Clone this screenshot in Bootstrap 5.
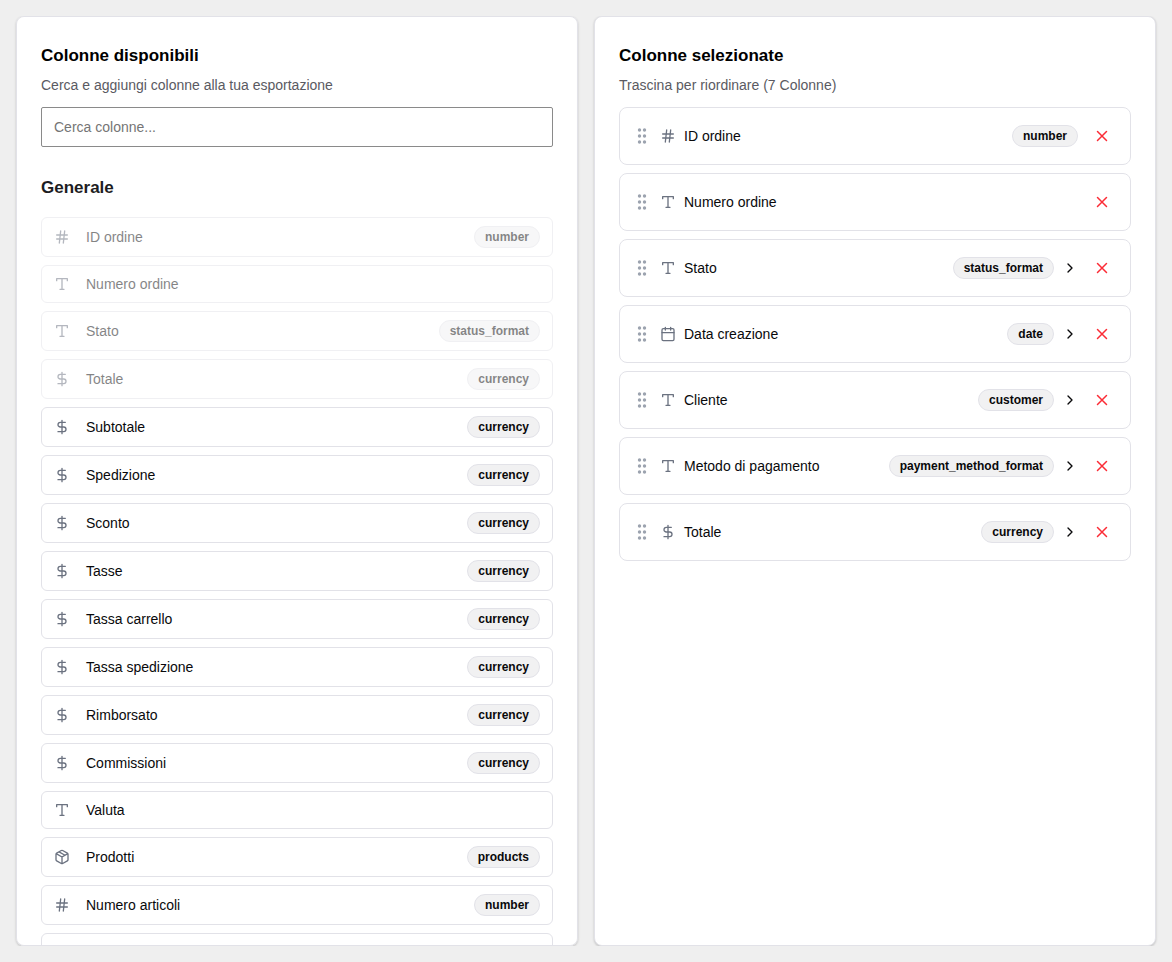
<!DOCTYPE html>
<html lang="it">
<head>
<meta charset="utf-8">
<meta name="viewport" content="width=device-width, initial-scale=1">
<title>Colonne</title>
<link href="https://cdn.jsdelivr.net/npm/bootstrap@5.3.0/dist/css/bootstrap.min.css" rel="stylesheet">
<style>
  body { background: #efefef; color: #09090b; font: 14px/20px "Liberation Sans", Arial, sans-serif; }
  .panel { border: 1px solid #e2e2e8; border-radius: 8px; box-shadow: 0 1px 3px rgba(0,0,0,.1), 0 1px 2px rgba(0,0,0,.1); }
  .panel-scroll { overflow-y: auto; scrollbar-width: none; }
  .panel-scroll::-webkit-scrollbar { display: none; }
  .panel-title { font-size: 17px; line-height: 30px; font-weight: 700; color: #000; margin-bottom: 4px; }
  .panel-hint { color: #5a5a62; margin-bottom: 12px; }
  .search { height: 40px; font-size: 14px; border: 1px solid #8a8a8a; border-radius: 2px; padding: 8px 12px; }
  .search::placeholder { color: #757575; }
  .group-title { font-size: 17px; line-height: 26px; font-weight: 700; color: #1d1d22; margin: 28px 0 16px; }
  .field { border: 1px solid #e2e2e8; border-radius: 6px; background: #fff; color: inherit; padding: 8px 12px; min-height: 38px; }
  .field:disabled { opacity: .5; color: inherit; }
  .picked { border: 1px solid #e2e2e8; border-radius: 8px; padding: 12px; }
  .tag { font-size: 12px; line-height: 16px; font-weight: 700; padding: 2px 10px; border: 1px solid #e2e2e8; border-radius: 11px; background: #f1f1f2; }
  .ico { width: 16px; height: 16px; flex: none; fill: none; stroke: currentColor; stroke-width: 2; stroke-linecap: round; stroke-linejoin: round; }
  .kind { color: #6b7280; }
  .grip { width: 20px; height: 20px; flex: none; fill: #9ca3af; cursor: grab; }
  .plain { border: 0; background: none; padding: 0; color: inherit; }
  .remove { width: 32px; height: 32px; color: #fb2c36; }
  .remove .ico { width: 18px; height: 18px; }
</style>
</head>
<body>
<svg class="d-none" aria-hidden="true">
  <symbol id="hash" viewBox="0 0 24 24"><path d="M4 9h16M4 15h16M10 3 8 21M16 3l-2 18"/></symbol>
  <symbol id="type" viewBox="0 0 24 24"><path d="M4 7V4h16v3M9 20h6M12 4v16"/></symbol>
  <symbol id="dollar" viewBox="0 0 24 24"><path d="M12 2v20M17 5H9.500a3.500 3.500 0 0 0 0 7h5a3.500 3.500 0 0 1 0 7H6"/></symbol>
  <symbol id="calendar" viewBox="0 0 24 24"><path d="M8 2v4M16 2v4M3 10h18"/><rect x="3" y="4" width="18" height="18" rx="2"/></symbol>
  <symbol id="package" viewBox="0 0 24 24"><path d="m7.500 4.270 9 5.150M21 8a2 2 0 0 0-1-1.730l-7-4a2 2 0 0 0-2 0l-7 4A2 2 0 0 0 3 8v8a2 2 0 0 0 1 1.730l7 4a2 2 0 0 0 2 0l7-4A2 2 0 0 0 21 16ZM3.300 7l8.700 5 8.700-5M12 22V12"/></symbol>
  <symbol id="chevron" viewBox="0 0 24 24"><path d="m9 18 6-6-6-6"/></symbol>
  <symbol id="cross" viewBox="0 0 24 24"><path d="M18 6 6 18M6 6l12 12"/></symbol>
  <symbol id="dots" viewBox="0 0 20 20"><circle cx="7.500" cy="4" r="1.700"/><circle cx="12.500" cy="4" r="1.700"/><circle cx="7.500" cy="10" r="1.700"/><circle cx="12.500" cy="10" r="1.700"/><circle cx="7.500" cy="16" r="1.700"/><circle cx="12.500" cy="16" r="1.700"/></symbol>
</svg>

<main class="container-fluid vh-100 p-3 d-flex">
  <div class="row g-3 flex-fill mh-100">
    <section class="col-6 mh-100 overflow-hidden">
      <div class="panel bg-white h-100 panel-scroll px-4 pt-4">
        <h2 class="panel-title">Colonne disponibili</h2>
        <p class="panel-hint">Cerca e aggiungi colonne alla tua esportazione</p>
        <input type="search" class="form-control search" placeholder="Cerca colonne..." aria-label="Cerca colonne">
        <h3 class="group-title">Generale</h3>
        <div class="d-flex flex-column gap-2">
          <button type="button" disabled class="field d-flex align-items-center gap-3 text-start"><svg class="ico kind"><use href="#hash"/></svg><span class="flex-fill">ID ordine</span><span class="tag">number</span></button>
          <button type="button" disabled class="field d-flex align-items-center gap-3 text-start"><svg class="ico kind"><use href="#type"/></svg><span class="flex-fill">Numero ordine</span></button>
          <button type="button" disabled class="field d-flex align-items-center gap-3 text-start"><svg class="ico kind"><use href="#type"/></svg><span class="flex-fill">Stato</span><span class="tag">status_format</span></button>
          <button type="button" disabled class="field d-flex align-items-center gap-3 text-start"><svg class="ico kind"><use href="#dollar"/></svg><span class="flex-fill">Totale</span><span class="tag">currency</span></button>
          <button type="button" class="field d-flex align-items-center gap-3 text-start"><svg class="ico kind"><use href="#dollar"/></svg><span class="flex-fill">Subtotale</span><span class="tag">currency</span></button>
          <button type="button" class="field d-flex align-items-center gap-3 text-start"><svg class="ico kind"><use href="#dollar"/></svg><span class="flex-fill">Spedizione</span><span class="tag">currency</span></button>
          <button type="button" class="field d-flex align-items-center gap-3 text-start"><svg class="ico kind"><use href="#dollar"/></svg><span class="flex-fill">Sconto</span><span class="tag">currency</span></button>
          <button type="button" class="field d-flex align-items-center gap-3 text-start"><svg class="ico kind"><use href="#dollar"/></svg><span class="flex-fill">Tasse</span><span class="tag">currency</span></button>
          <button type="button" class="field d-flex align-items-center gap-3 text-start"><svg class="ico kind"><use href="#dollar"/></svg><span class="flex-fill">Tassa carrello</span><span class="tag">currency</span></button>
          <button type="button" class="field d-flex align-items-center gap-3 text-start"><svg class="ico kind"><use href="#dollar"/></svg><span class="flex-fill">Tassa spedizione</span><span class="tag">currency</span></button>
          <button type="button" class="field d-flex align-items-center gap-3 text-start"><svg class="ico kind"><use href="#dollar"/></svg><span class="flex-fill">Rimborsato</span><span class="tag">currency</span></button>
          <button type="button" class="field d-flex align-items-center gap-3 text-start"><svg class="ico kind"><use href="#dollar"/></svg><span class="flex-fill">Commissioni</span><span class="tag">currency</span></button>
          <button type="button" class="field d-flex align-items-center gap-3 text-start"><svg class="ico kind"><use href="#type"/></svg><span class="flex-fill">Valuta</span></button>
          <button type="button" class="field d-flex align-items-center gap-3 text-start"><svg class="ico kind"><use href="#package"/></svg><span class="flex-fill">Prodotti</span><span class="tag">products</span></button>
          <button type="button" class="field d-flex align-items-center gap-3 text-start"><svg class="ico kind"><use href="#hash"/></svg><span class="flex-fill">Numero articoli</span><span class="tag">number</span></button>
          <div class="field"></div>
        </div>
      </div>
    </section>

    <section class="col-6 mh-100 overflow-hidden">
      <div class="panel bg-white h-100 panel-scroll px-4 pt-4">
        <h2 class="panel-title">Colonne selezionate</h2>
        <p class="panel-hint">Trascina per riordinare (7 Colonne)</p>
        <ul class="list-unstyled d-flex flex-column gap-2 mb-0">
          <li class="picked d-flex align-items-center gap-2"><svg class="grip"><use href="#dots"/></svg><svg class="ico kind"><use href="#hash"/></svg><span class="flex-fill">ID ordine</span><span class="tag">number</span><button type="button" aria-label="Rimuovi" class="plain remove d-flex align-items-center justify-content-center"><svg class="ico"><use href="#cross"/></svg></button></li>
          <li class="picked d-flex align-items-center gap-2"><svg class="grip"><use href="#dots"/></svg><svg class="ico kind"><use href="#type"/></svg><span class="flex-fill">Numero ordine</span><button type="button" aria-label="Rimuovi" class="plain remove d-flex align-items-center justify-content-center"><svg class="ico"><use href="#cross"/></svg></button></li>
          <li class="picked d-flex align-items-center gap-2"><svg class="grip"><use href="#dots"/></svg><svg class="ico kind"><use href="#type"/></svg><span class="flex-fill">Stato</span><span class="tag">status_format</span><button type="button" aria-label="Espandi" class="plain d-flex"><svg class="ico"><use href="#chevron"/></svg></button><button type="button" aria-label="Rimuovi" class="plain remove d-flex align-items-center justify-content-center"><svg class="ico"><use href="#cross"/></svg></button></li>
          <li class="picked d-flex align-items-center gap-2"><svg class="grip"><use href="#dots"/></svg><svg class="ico kind"><use href="#calendar"/></svg><span class="flex-fill">Data creazione</span><span class="tag">date</span><button type="button" aria-label="Espandi" class="plain d-flex"><svg class="ico"><use href="#chevron"/></svg></button><button type="button" aria-label="Rimuovi" class="plain remove d-flex align-items-center justify-content-center"><svg class="ico"><use href="#cross"/></svg></button></li>
          <li class="picked d-flex align-items-center gap-2"><svg class="grip"><use href="#dots"/></svg><svg class="ico kind"><use href="#type"/></svg><span class="flex-fill">Cliente</span><span class="tag">customer</span><button type="button" aria-label="Espandi" class="plain d-flex"><svg class="ico"><use href="#chevron"/></svg></button><button type="button" aria-label="Rimuovi" class="plain remove d-flex align-items-center justify-content-center"><svg class="ico"><use href="#cross"/></svg></button></li>
          <li class="picked d-flex align-items-center gap-2"><svg class="grip"><use href="#dots"/></svg><svg class="ico kind"><use href="#type"/></svg><span class="flex-fill">Metodo di pagamento</span><span class="tag">payment_method_format</span><button type="button" aria-label="Espandi" class="plain d-flex"><svg class="ico"><use href="#chevron"/></svg></button><button type="button" aria-label="Rimuovi" class="plain remove d-flex align-items-center justify-content-center"><svg class="ico"><use href="#cross"/></svg></button></li>
          <li class="picked d-flex align-items-center gap-2"><svg class="grip"><use href="#dots"/></svg><svg class="ico kind"><use href="#dollar"/></svg><span class="flex-fill">Totale</span><span class="tag">currency</span><button type="button" aria-label="Espandi" class="plain d-flex"><svg class="ico"><use href="#chevron"/></svg></button><button type="button" aria-label="Rimuovi" class="plain remove d-flex align-items-center justify-content-center"><svg class="ico"><use href="#cross"/></svg></button></li>
        </ul>
      </div>
    </section>
  </div>
</main>
<script src="https://cdn.jsdelivr.net/npm/bootstrap@5.3.0/dist/js/bootstrap.bundle.min.js"></script>
</body>
</html>
